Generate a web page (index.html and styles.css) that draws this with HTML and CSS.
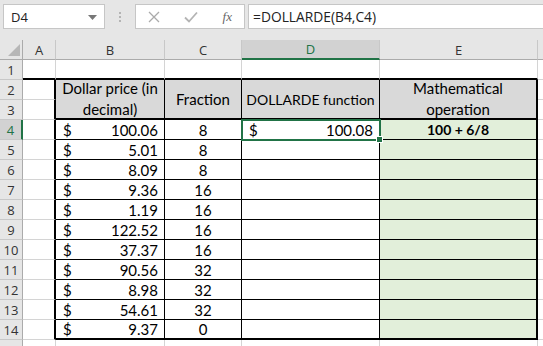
FILE: index.html
```html
<!DOCTYPE html>
<html lang="en">
<head>
  <meta charset="UTF-8">
  <title>DOLLARDE</title>
  <link rel="stylesheet" href="styles.css">
</head>
<body>

  <!-- Formula bar -->
  <div class="toolbar">
    <div class="name-box">
      <span>D4</span>
      <svg class="caret" width="9" height="5" viewBox="0 0 9 5"><path d="M0 0h9L4.5 5z" fill="#777"/></svg>
    </div>
    <div class="grip"><i></i><i></i><i></i></div>
    <div class="fx-box">
      <svg width="12" height="12" viewBox="0 0 12 12"><path d="M1 1l10 10M11 1L1 11" stroke="#aaa" stroke-width="1.3" fill="none"/></svg>
      <svg width="14" height="12" viewBox="0 0 14 12"><path d="M1 6.5l4 4L13 1.5" stroke="#b4b4b4" stroke-width="1.8" fill="none"/></svg>
      <span class="fx">fx</span>
    </div>
    <div class="formula">=DOLLARDE(B4,C4)</div>
  </div>

  <!-- Sheet -->
  <div class="sheet">
    <div class="corner"><svg width="12" height="12" viewBox="0 0 12 12"><path d="M12 0v12H0z" fill="#b7b7b7"/></svg></div>
    <div class="col-head">A</div>
    <div class="col-head">B</div>
    <div class="col-head">C</div>
    <div class="col-head active">D</div>
    <div class="col-head">E</div>
    <div class="col-head last"></div>

    <div class="row-head">1</div>
    <div class="cell top"></div><div class="cell top"></div><div class="cell top"></div><div class="cell top"></div><div class="cell top"></div><div class="cell last"></div>

    <div class="row-head">2</div>
    <div class="cell left"></div>
    <div class="cell th span2">Dollar price (in decimal)</div>
    <div class="cell th span2">Fraction</div>
    <div class="cell th span2 nowrap">DOLLARDE function</div>
    <div class="cell th span2 edge">Mathematical operation</div>
    <div class="cell last"></div>
    <div class="row-head">3</div>
    <div class="cell left"></div>
    <div class="cell last"></div>

    <div class="row-head active">4</div>
    <div class="cell left"></div>
    <div class="cell td money"><span>$</span><span>100.06</span></div>
    <div class="cell td num">8</div>
    <div class="cell td money selected"><span>$</span><span>100.08</span><i class="handle"></i></div>
    <div class="cell td calc edge">100 + 6/8</div>
    <div class="cell last"></div>

    <div class="row-head">5</div>
    <div class="cell left"></div>
    <div class="cell td money"><span>$</span><span>5.01</span></div>
    <div class="cell td num">8</div>
    <div class="cell td"></div>
    <div class="cell td calc edge"></div>
    <div class="cell last"></div>

    <div class="row-head">6</div>
    <div class="cell left"></div>
    <div class="cell td money"><span>$</span><span>8.09</span></div>
    <div class="cell td num">8</div>
    <div class="cell td"></div>
    <div class="cell td calc edge"></div>
    <div class="cell last"></div>

    <div class="row-head">7</div>
    <div class="cell left"></div>
    <div class="cell td money"><span>$</span><span>9.36</span></div>
    <div class="cell td num">16</div>
    <div class="cell td"></div>
    <div class="cell td calc edge"></div>
    <div class="cell last"></div>

    <div class="row-head">8</div>
    <div class="cell left"></div>
    <div class="cell td money"><span>$</span><span>1.19</span></div>
    <div class="cell td num">16</div>
    <div class="cell td"></div>
    <div class="cell td calc edge"></div>
    <div class="cell last"></div>

    <div class="row-head">9</div>
    <div class="cell left"></div>
    <div class="cell td money"><span>$</span><span>122.52</span></div>
    <div class="cell td num">16</div>
    <div class="cell td"></div>
    <div class="cell td calc edge"></div>
    <div class="cell last"></div>

    <div class="row-head">10</div>
    <div class="cell left"></div>
    <div class="cell td money"><span>$</span><span>37.37</span></div>
    <div class="cell td num">16</div>
    <div class="cell td"></div>
    <div class="cell td calc edge"></div>
    <div class="cell last"></div>

    <div class="row-head">11</div>
    <div class="cell left"></div>
    <div class="cell td money"><span>$</span><span>90.56</span></div>
    <div class="cell td num">32</div>
    <div class="cell td"></div>
    <div class="cell td calc edge"></div>
    <div class="cell last"></div>

    <div class="row-head">12</div>
    <div class="cell left"></div>
    <div class="cell td money"><span>$</span><span>8.98</span></div>
    <div class="cell td num">32</div>
    <div class="cell td"></div>
    <div class="cell td calc edge"></div>
    <div class="cell last"></div>

    <div class="row-head">13</div>
    <div class="cell left"></div>
    <div class="cell td money"><span>$</span><span>54.61</span></div>
    <div class="cell td num">32</div>
    <div class="cell td"></div>
    <div class="cell td calc edge"></div>
    <div class="cell last"></div>

    <div class="row-head">14</div>
    <div class="cell left"></div>
    <div class="cell td money bottom"><span>$</span><span>9.37</span></div>
    <div class="cell td num bottom">0</div>
    <div class="cell td bottom"></div>
    <div class="cell td calc edge bottom"></div>
    <div class="cell last"></div>

    <div class="row-head"></div>
    <div class="cell"></div><div class="cell"></div><div class="cell"></div><div class="cell"></div><div class="cell"></div><div class="cell last"></div>
  </div>

</body>
</html>
```

FILE: styles.css
```css
body {
  margin: 0;
  background: #e6e6e6;
  font-family: "Open Sans", sans-serif;
  overflow: hidden;
}
.toolbar {
  height: 40px;
  display: flex;
  align-items: flex-start;
  padding-top: 4px;
  box-sizing: border-box;
}
.name-box {
  margin-left: 3px;
  width: 102px;
  height: 25px;
  box-sizing: border-box;
  border: 1px solid #c6c6c6;
  background: #fff;
  display: flex;
  align-items: center;
  justify-content: space-between;
  padding: 0 7px 0 7px;
  font-size: 13px;
  color: #222;
}
.caret {
  margin-top: 1px;
}
.grip {
  width: 30px;
  height: 25px;
  display: flex;
  flex-direction: column;
  align-items: center;
  justify-content: center;
  gap: 2px;
}
.grip i {
  width: 2px;
  height: 2px;
  background: #b4b4b4;
}
.fx-box {
  width: 110px;
  height: 25px;
  box-sizing: border-box;
  border: 1px solid #c6c6c6;
  background: #fff;
  display: flex;
  align-items: center;
  justify-content: space-between;
  padding: 0 12px 0 12px;
}
.fx {
  font-family: "Liberation Serif", serif;
  font-style: italic;
  font-size: 13px;
  color: #666;
}
.formula {
  flex: 1;
  margin-left: 3px;
  height: 25px;
  box-sizing: border-box;
  border: 1px solid #c6c6c6;
  border-right: none;
  background: #fff;
  padding-left: 4px;
  font-size: 13.8px;
  line-height: 23px;
  color: #222;
}

/* grid */
.sheet {
  display: grid;
  grid-template-columns: 23px 33px 109px 77px 138px 158px 1fr;
  grid-template-rows: 20px repeat(15, 20px);
  background: #fff;
  font-family: Lato, sans-serif;
  font-size: 15px;
  color: #000;
}
.corner, .col-head, .row-head {
  background: #e6e6e6;
  color: #333;
  font-family: "Open Sans", sans-serif;
  font-size: 13px;
  box-sizing: border-box;
}
.corner {
  border-right: 1px solid #ababab;
  border-bottom: 1px solid #ababab;
  display: flex;
  align-items: flex-end;
  justify-content: flex-end;
  padding: 0 2px 3px 0;
}
.col-head {
  border-right: 1px solid #c8c8c8;
  border-bottom: 1px solid #ababab;
  display: flex;
  align-items: center;
  justify-content: center;
}
.col-head.active {
  background: #d2d2d2;
  color: #217346;
  border-bottom: 2px solid #217346;
}
.col-head.last {
  border-right: none;
}
.row-head {
  border-right: 1px solid #ababab;
  border-bottom: 1px solid #c8c8c8;
  display: flex;
  align-items: center;
  justify-content: center;
}
.row-head.active {
  background: #d2d2d2;
  color: #217346;
  border-right: 2px solid #217346;
}
.cell {
  box-sizing: border-box;
  border-right: 1px solid #d4d4d4;
  border-bottom: 1px solid #d4d4d4;
}
.cell.last {
  border-right: none;
}
.cell.top {
  border-bottom: 2px solid #000;
}
.cell.left {
  border-right: 2px solid #000;
}
.th {
  background: #d9d9d9;
  border-right: 1px solid #000;
  border-bottom: 2px solid #000;
  display: flex;
  align-items: center;
  justify-content: center;
  text-align: center;
  line-height: 21px;
  padding: 0 2px;
}
.nowrap {
  white-space: nowrap;
  font-size: 14px;
}
.span2 {
  grid-row: span 2;
}
.td {
  border-right: 1px solid #000;
  border-bottom: 1px solid #000;
  display: flex;
  align-items: center;
  line-height: 18px;
}
.edge {
  border-right: 2px solid #000;
}
.bottom {
  border-bottom: 2px solid #000;
}
.money {
  justify-content: space-between;
  padding: 0 6px 0 7px;
}
.num {
  justify-content: center;
}
.calc {
  background: #e2efda;
  justify-content: center;
  font-weight: bold;
  font-size: 14px;
}
.selected {
  position: relative;
  outline: 2px solid #217346;
  outline-offset: -1px;
  z-index: 1;
}
.handle {
  position: absolute;
  right: -4px;
  bottom: -4px;
  width: 5px;
  height: 5px;
  background: #217346;
  border: 1px solid #fff;
}
```
